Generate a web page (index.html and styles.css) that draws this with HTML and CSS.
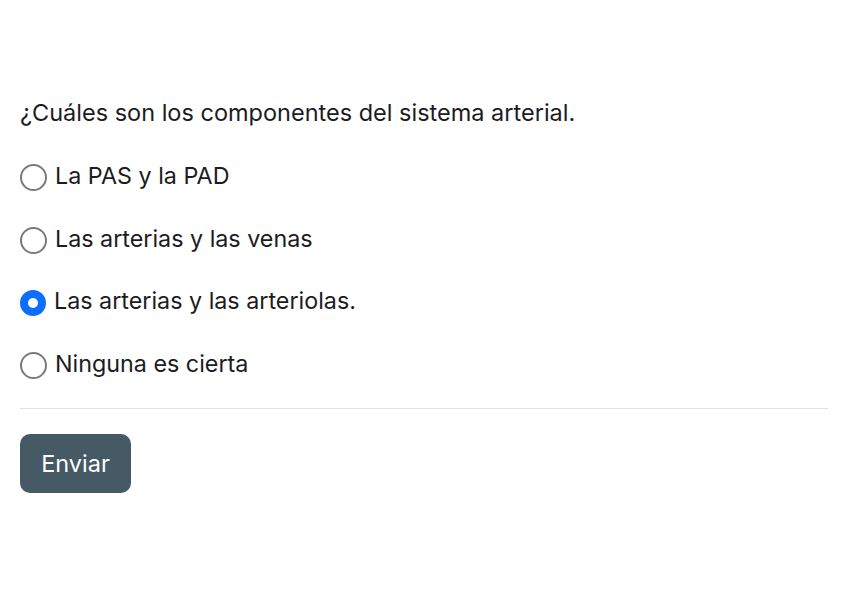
FILE: index.html
```html
<!DOCTYPE html>
<html lang="es">
<head>
<meta charset="utf-8">
<link rel="stylesheet" href="styles.css">
</head>
<body>
<form class="quiz">
  <p class="question">¿Cuáles son los componentes del sistema arterial.</p>
  <div class="options">
    <label class="option"><span class="radio"></span><span>La PAS y la PAD</span></label>
    <label class="option"><span class="radio"></span><span>Las arterias y las venas</span></label>
    <label class="option"><span class="radio checked"></span><span>Las arterias y las arteriolas.</span></label>
    <label class="option"><span class="radio"></span><span>Ninguna es cierta</span></label>
  </div>
  <hr class="divider">
  <button type="button" class="submit">Enviar</button>
</form>
</body>
</html>
```
FILE: styles.css
```css
html, body { margin: 0; padding: 0; background: #fff; }
body { font-family: Inter, "Noto Sans", sans-serif; color: #1c1c1e; }
.quiz { padding: 98px 20px 0 20px; }
.question { margin: 0; font-size: 23.5px; line-height: 30px; }
.options { display: flex; flex-direction: column; gap: 32.7px; margin-top: 33px; }
.option { display: flex; align-items: center; gap: 8px; font-size: 23.3px; line-height: 30px; }
.radio { width: 23px; height: 23px; border: 2px solid #7a7a7a; border-radius: 50%; box-sizing: content-box; margin-top: 3px; }
.radio.checked { width: 10px; height: 10px; border: 8.5px solid #0d6efd; background: #fff; }
.divider { border: 0; border-top: 1px solid #e2e2e2; margin: 29px 0 25px 0; }
.submit { font-family: inherit; font-size: 23.5px; color: #fff; background: #455a64; border: 0; border-radius: 10px; width: 111px; height: 59px; padding: 0; }
```
